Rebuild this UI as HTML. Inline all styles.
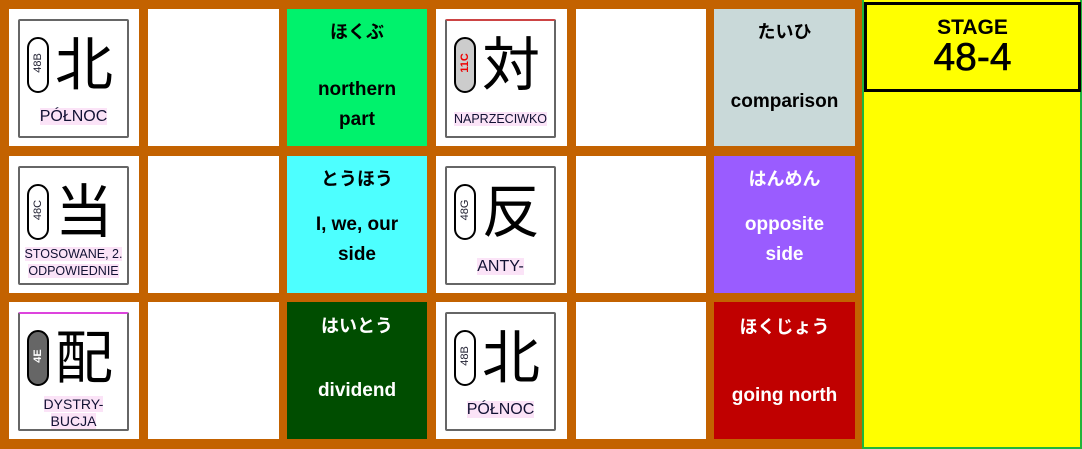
<!DOCTYPE html>
<html><head><meta charset="utf-8"><style>
*{margin:0;padding:0;box-sizing:border-box}
body{width:1082px;height:449px;position:relative;overflow:hidden;background:#c36200;font-family:"Liberation Sans","Noto Sans CJK JP",sans-serif}
.c{position:absolute;background:#fff}
.t{position:absolute;color:#fff;font-weight:bold;text-align:center;font-size:19px;line-height:30px}
.t .j{position:absolute;left:0;right:0;font-size:18px;font-weight:bold}
.t .e{position:absolute;left:0;right:0}
.card{position:absolute;left:9px;top:10px;width:111px;height:119px;border:2px solid #666;border-radius:2px}
.k{position:absolute;left:26px;top:3px;width:76px;text-align:center;font-size:58px;line-height:72px;color:#000;font-family:"Noto Sans CJK JP",sans-serif}
.cl{position:absolute;left:7px;top:16px;width:22px;height:56px;border:2px solid #000;border-radius:11px;background:#fff}
.cl span{position:absolute;left:-8px;top:18px;width:34px;text-align:center;font-size:11px;color:#223;transform:rotate(-90deg)}
.lb{position:absolute;left:0;right:0;text-align:center;color:#113;font-size:15px;line-height:17px}
.lb b{font-weight:normal;background:#fbe3f7}
</style></head><body>
<!-- row1 -->
<div class="c" style="left:9px;top:9px;width:130px;height:137px"><div class="card"><div class="cl"><span>48B</span></div><div class="k">北</div><div class="lb" style="top:87px;font-size:16px"><b>PÓŁNOC</b></div></div></div>
<div class="c" style="left:148px;top:9px;width:131px;height:137px"></div>
<div class="t" style="left:287px;top:9px;width:140px;height:137px;background:#00f26c;color:#000"><div class="j" style="top:8px">ほくぶ</div><div class="e" style="top:66px">northern<br>part</div></div>
<div class="c" style="left:436px;top:9px;width:131px;height:137px"><div class="card" style="border-top-color:#c44"><div class="cl" style="background:#ccc"><span style="color:#e00;font-weight:bold">11C</span></div><div class="k">対</div><div class="lb" style="top:90px;font-size:12.5px"><b>NAPRZECIWKO</b></div></div></div>
<div class="c" style="left:576px;top:9px;width:130px;height:137px"></div>
<div class="t" style="left:714px;top:9px;width:141px;height:137px;background:#c9d9d9;color:#000"><div class="j" style="top:8px">たいひ</div><div class="e" style="top:78px">comparison</div></div>
<!-- row2 -->
<div class="c" style="left:9px;top:156px;width:130px;height:137px"><div class="card"><div class="cl"><span>48C</span></div><div class="k">当</div><div class="lb" style="top:78px;font-size:12.5px"><b>STOSOWANE, 2.<br>ODPOWIEDNIE</b></div></div></div>
<div class="c" style="left:148px;top:156px;width:131px;height:137px"></div>
<div class="t" style="left:287px;top:156px;width:140px;height:137px;background:#4dffff;color:#000"><div class="j" style="top:8px">とうほう</div><div class="e" style="top:54px">I, we, our<br>side</div></div>
<div class="c" style="left:436px;top:156px;width:131px;height:137px"><div class="card"><div class="cl"><span>48G</span></div><div class="k">反</div><div class="lb" style="top:90px;font-size:16px"><b>ANTY-</b></div></div></div>
<div class="c" style="left:576px;top:156px;width:130px;height:137px"></div>
<div class="t" style="left:714px;top:156px;width:141px;height:137px;background:#9a5cff"><div class="j" style="top:8px">はんめん</div><div class="e" style="top:54px">opposite<br>side</div></div>
<!-- row3 -->
<div class="c" style="left:9px;top:302px;width:130px;height:137px"><div class="card" style="border-top-color:#d4d"><div class="cl" style="background:#666"><span style="color:#fff;font-weight:bold">4E</span></div><div class="k">配</div><div class="lb" style="top:82px;font-size:14px"><b>DYSTRY-<br>BUCJA</b></div></div></div>
<div class="c" style="left:148px;top:302px;width:131px;height:137px"></div>
<div class="t" style="left:287px;top:302px;width:140px;height:137px;background:#004d00"><div class="j" style="top:9px">はいとう</div><div class="e" style="top:74px">dividend</div></div>
<div class="c" style="left:436px;top:302px;width:131px;height:137px"><div class="card"><div class="cl"><span>48B</span></div><div class="k">北</div><div class="lb" style="top:87px;font-size:16px"><b>PÓŁNOC</b></div></div></div>
<div class="c" style="left:576px;top:302px;width:130px;height:137px"></div>
<div class="t" style="left:714px;top:302px;width:141px;height:137px;background:#c00000"><div class="j" style="top:10px">ほくじょう</div><div class="e" style="top:79px">going north</div></div>
<!-- right -->
<div style="position:absolute;left:862px;top:0;width:220px;height:449px;background:#ffff00;border:2px solid #1fb53a;border-top:none"></div>
<div style="position:absolute;left:864px;top:2px;width:217px;height:90px;background:#ffff00;border:3px solid #000;text-align:center;font-weight:bold;color:#000">
<div style="font-size:21px;line-height:22px;margin-top:12px">STAGE</div>
<div style="font-size:39px;line-height:38px;font-weight:normal;-webkit-text-stroke:0.6px #000">48-4</div></div>
</body></html>
